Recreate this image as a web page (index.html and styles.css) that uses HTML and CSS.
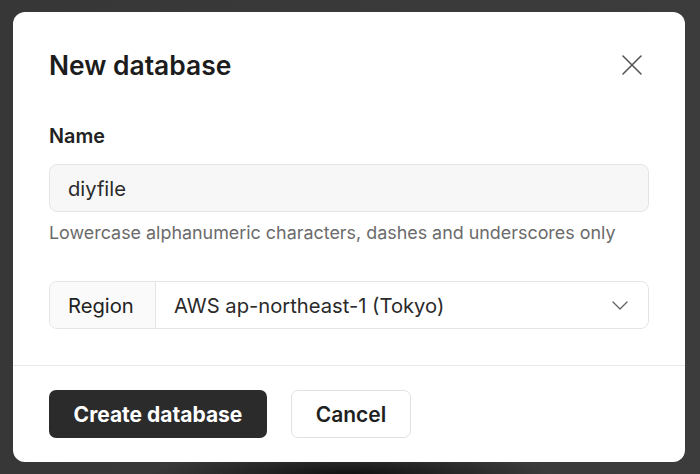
FILE: index.html
```html
<!DOCTYPE html>
<html lang="en">
<head>
<meta charset="utf-8">
<title>New database</title>
<link rel="stylesheet" href="styles.css">
</head>
<body>
<div class="backdrop">
  <div class="dialog">
    <div class="dialog-body">
      <div class="dialog-header">
        <h2 class="dialog-title">New database</h2>
        <button class="close-btn" aria-label="Close">
          <svg width="20" height="20" viewBox="0 0 20 20" fill="none" stroke="#555" stroke-width="1.6" stroke-linecap="round"><path d="M1 1 L19 19 M19 1 L1 19"/></svg>
        </button>
      </div>
      <label class="field-label" for="name">Name</label>
      <div class="text-input">diyfile</div>
      <p class="help">Lowercase alphanumeric characters, dashes and underscores only</p>
      <div class="select-group">
        <div class="addon">Region</div>
        <div class="select">
          <span>AWS ap-northeast-1 (Tokyo)</span>
          <svg width="16" height="9" viewBox="0 0 16 9" fill="none" stroke="#666" stroke-width="1.4" stroke-linecap="round" stroke-linejoin="round"><path d="M1 1 L8 8 L15 1"/></svg>
        </div>
      </div>
    </div>
    <div class="dialog-footer">
      <button class="btn btn-primary">Create database</button>
      <button class="btn btn-secondary">Cancel</button>
    </div>
  </div>
</div>
</body>
</html>
```
FILE: styles.css
```css
html, body {
  margin: 0;
  padding: 0;
}
body {
  width: 700px;
  height: 474px;
  overflow: hidden;
  background: #3a3a3a;
  font-family: Inter, "Noto Sans", sans-serif;
  color: #1f1f1f;
}
.backdrop {
  height: 474px;
  box-sizing: border-box;
  padding: 12px 15px 0 13px;
  background:
    radial-gradient(ellipse 200px 22px at 350px 474px, rgba(10,10,10,0.85), rgba(10,10,10,0) 100%),
    linear-gradient(90deg, #373737, #3c3c3c);
}
.dialog {
  width: 672px;
  height: 450px;
  background: #fff;
  border-radius: 12px;
  display: flex;
  flex-direction: column;
  overflow: hidden;
}
.dialog-body {
  padding: 37px 36px 36px 36px;
  display: flex;
  flex-direction: column;
  border-bottom: 1px solid #e8e8e8;
}
.dialog-header {
  display: flex;
  align-items: center;
  justify-content: space-between;
  height: 32px;
  margin-bottom: 43px;
}
.dialog-title {
  margin: 0;
  font-size: 26.4px;
  line-height: 32px;
  font-weight: 600;
  color: #1c1c1c;
}
.close-btn {
  background: none;
  border: 0;
  padding: 0;
  width: 20px;
  height: 20px;
  margin-right: 7px;
  display: flex;
}
.field-label {
  font-size: 19.8px;
  line-height: 24px;
  font-weight: 600;
  color: #222;
  margin-bottom: 16px;
}
.text-input {
  height: 48px;
  box-sizing: border-box;
  border: 1px solid #e4e4e4;
  background: #f7f7f7;
  border-radius: 8px;
  padding: 0 18px;
  display: flex;
  align-items: center;
  font-size: 20.2px;
  color: #2a2a2a;
}
.help {
  margin: 9px 0 0;
  font-size: 17.9px;
  line-height: 24px;
  color: #6b6b6b;
}
.select-group {
  margin-top: 36px;
  height: 48px;
  box-sizing: border-box;
  border: 1px solid #e4e4e4;
  border-radius: 8px;
  display: flex;
  overflow: hidden;
  font-size: 20.2px;
}
.addon {
  width: 106px;
  box-sizing: border-box;
  background: #fafafa;
  border-right: 1px solid #e4e4e4;
  display: flex;
  align-items: center;
  padding-left: 18px;
  color: #222;
}
.select {
  flex: 1;
  display: flex;
  align-items: center;
  justify-content: space-between;
  padding: 0 20px 0 18px;
  color: #2a2a2a;
}
.dialog-footer {
  flex: 1;
  display: flex;
  align-items: flex-start;
  gap: 24px;
  padding: 24px 36px 0;
}
.btn {
  height: 48px;
  box-sizing: border-box;
  font-family: inherit;
  font-size: 21px;
  border-radius: 7px;
  padding: 0;
  cursor: pointer;
}
.btn-primary {
  background: #2b2b2b;
  color: #fff;
  border: 0;
  width: 218px;
  font-weight: 700;
}
.btn-secondary {
  background: #fff;
  color: #1f1f1f;
  border: 1px solid #e2e2e2;
  width: 120px;
  font-weight: 600;
}
```
